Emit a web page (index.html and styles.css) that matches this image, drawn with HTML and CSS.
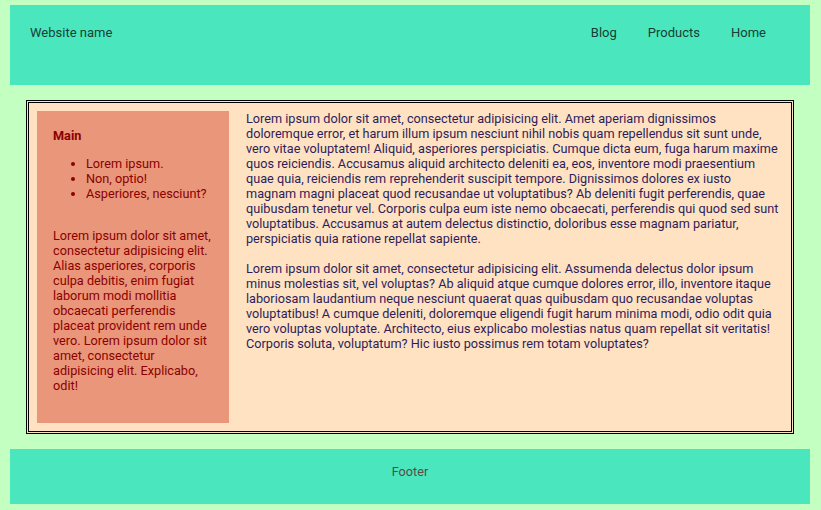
FILE: index.html
```html
<!DOCTYPE html>
<html lang="en">
<head>
<meta charset="utf-8">
<title>Website name</title>
<link rel="stylesheet" href="styles.css">
</head>
<body>
<header class="site-header">
  <div class="brand">Website name</div>
  <nav class="nav">
    <a href="#">Blog</a>
    <a href="#">Products</a>
    <a href="#">Home</a>
  </nav>
</header>
<div class="container">
  <aside class="sidebar">
    <h3 class="sidebar-title">Main</h3>
    <ul class="sidebar-list">
      <li>Lorem ipsum.</li>
      <li>Non, optio!</li>
      <li>Asperiores, nesciunt?</li>
    </ul>
    <p class="sidebar-text">Lorem ipsum dolor sit amet, consectetur adipisicing elit. Alias asperiores, corporis culpa debitis, enim fugiat laborum modi mollitia obcaecati perferendis placeat provident rem unde vero. Lorem ipsum dolor sit amet, consectetur adipisicing elit. Explicabo, odit!</p>
  </aside>
  <main class="content">
    <p>Lorem ipsum dolor sit amet, consectetur adipisicing elit. Amet aperiam dignissimos doloremque error, et harum illum ipsum nesciunt nihil nobis quam repellendus sit sunt unde, vero vitae voluptatem! Aliquid, asperiores perspiciatis. Cumque dicta eum, fuga harum maxime quos reiciendis. Accusamus aliquid architecto deleniti ea, eos, inventore modi praesentium quae quia, reiciendis rem reprehenderit suscipit tempore. Dignissimos dolores ex iusto magnam magni placeat quod recusandae ut voluptatibus? Ab deleniti fugit perferendis, quae quibusdam tenetur vel. Corporis culpa eum iste nemo obcaecati, perferendis qui quod sed sunt voluptatibus. Accusamus at autem delectus distinctio, doloribus esse magnam pariatur, perspiciatis quia ratione repellat sapiente.</p>
    <p>Lorem ipsum dolor sit amet, consectetur adipisicing elit. Assumenda delectus dolor ipsum minus molestias sit, vel voluptas? Ab aliquid atque cumque dolores error, illo, inventore itaque laboriosam laudantium neque nesciunt quaerat quas quibusdam quo recusandae voluptas voluptatibus! A cumque deleniti, doloremque eligendi fugit harum minima modi, odio odit quia vero voluptas voluptate. Architecto, eius explicabo molestias natus quam repellat sit veritatis! Corporis soluta, voluptatum? Hic iusto possimus rem totam voluptates?</p>
  </main>
</div>
<footer class="site-footer">Footer</footer>
</body>
</html>
```

FILE: styles.css
```css
* { box-sizing: border-box; }

body {
  margin: 5px 11px 7px 10px;
  background: #c3ffc0;
  font-family: Roboto, "Liberation Sans", sans-serif;
  font-size: 12.7px;
  line-height: 15px;
}

.site-header {
  height: 80px;
  background: #4ae7bf;
  padding: 20px 44px 0 20px;
  display: flex;
  justify-content: space-between;
  align-items: flex-start;
  color: #173f33;
  font-size: 13px;
}

.nav {
  display: flex;
  gap: 31px;
}

.nav a {
  color: #173f33;
  text-decoration: none;
}

.container {
  margin: 15px 16px 15px 16px;
  border: 3px double #000;
  background: #fee2c2;
  padding: 8px;
  display: flex;
  gap: 17px;
}

.sidebar {
  flex: 0 0 192px;
  background: #e9967a;
  color: #8b0000;
  padding: 17px 16px 30px 16px;
}

.sidebar-title {
  margin: 0;
  font-size: 12.7px;
  line-height: 15px;
  font-weight: bold;
}

.sidebar-list {
  margin: 13px 0 0 0;
  padding-left: 33px;
}

.sidebar-text {
  margin: 27px 0 0 0;
}

.content {
  flex: 1;
  color: #2e1d5a;
}

.content p {
  margin: 0 0 15px 0;
}

.site-footer {
  height: 55px;
  background: #4ae7bf;
  color: #5e4a42;
  text-align: center;
  padding-top: 15px;
}
```
